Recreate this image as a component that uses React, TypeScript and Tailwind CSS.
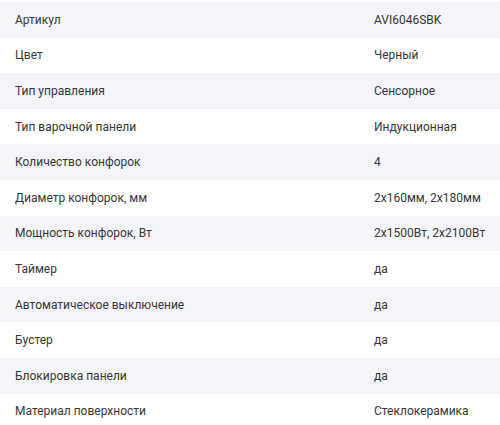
const rows: [string, string][] = [
  ["Артикул", "AVI6046SBK"],
  ["Цвет", "Черный"],
  ["Тип управления", "Сенсорное"],
  ["Тип варочной панели", "Индукционная"],
  ["Количество конфорок", "4"],
  ["Диаметр конфорок, мм", "2x160мм, 2x180мм"],
  ["Мощность конфорок, Вт", "2x1500Вт, 2x2100Вт"],
  ["Таймер", "да"],
  ["Автоматическое выключение", "да"],
  ["Бустер", "да"],
  ["Блокировка панели", "да"],
  ["Материал поверхности", "Стеклокерамика"],
];

export default function App() {
  return (
    <div
      className="h-[425px] w-[500px] overflow-hidden bg-white pt-[2px] text-[12px] text-[#363636]"
      style={{ fontFamily: "Roboto, 'Noto Sans', sans-serif" }}
    >
      {rows.map(([k, v], i) => (
        <div
          key={k}
          className={`flex h-[35.6px] items-center ${i % 2 === 0 ? "bg-[#f4f5f8]" : "bg-white"}`}
        >
          <div className="w-[374px] shrink-0 pl-[15px]">{k}</div>
          <div className="flex-1 whitespace-nowrap">{v}</div>
        </div>
      ))}
    </div>
  );
}
